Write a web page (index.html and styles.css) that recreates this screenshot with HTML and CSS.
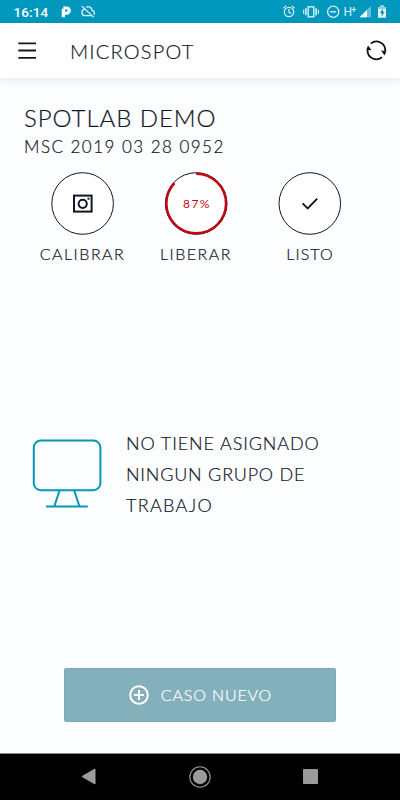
FILE: index.html
```html
<!DOCTYPE html>
<html lang="es">
<head>
<meta charset="utf-8">
<title>Microspot</title>
<link rel="stylesheet" href="styles.css">
</head>
<body>
<div class="status">
  <span class="time">16:14</span>
  <svg class="status-left" width="40" height="23" viewBox="0 0 40 23">
    <path d="M3.3 17.3V8.8M3.3 8h3.4a2.2 2.2 0 0 1 0 5.2H3" fill="none" stroke="#fff" stroke-width="3.2"/>
    <g fill="none" stroke="#d9f0f6" stroke-width="1.3"><path d="M24.5 9.2C21.2 9.8 20.8 15.6 25 15.6H32M26 7.2C29 5.7 31.8 7.4 32.1 10.5C34.5 11 35 13 33.8 15M21.7 6 L33.8 17.4"/></g>
  </svg>
  <svg class="status-right" width="110" height="23" viewBox="280 0 110 23" fill="none" stroke="#d9f0f6">
    <circle cx="289" cy="12" r="4.7" stroke-width="1.3"/><path d="M289 9v3.3l2.2 1.3M283.5 8.2l2.7-2.3M294.5 8.2l-2.7-2.3" stroke-width="1.2"/>
    <rect x="308.2" y="6.8" width="5.6" height="10" stroke-width="1.4"/><path d="M305.9 8.3v7M316.1 8.3v7" stroke-width="1.6"/><path d="M303.6 9.8v4M318.4 9.8v4" stroke-width="1.2"/>
    <circle cx="333.2" cy="11.8" r="5.6" stroke-width="1.3"/><path d="M330.2 11.8h6" stroke-width="1.4"/>
    <text class="network" x="343.4" y="16">H</text><path d="M351.3 9.5h5M353.8 7v5" stroke-width="1.2"/>
    <path d="M371 6v11.2h-11.5z" fill="#66bfd5" stroke="none"/><path d="M367 10v7.2h-7.5z" fill="#fff" stroke="none"/>
    <path d="M380 5.5h4v1.7h2v10.6h-8V7.2h2z" fill="#e4f4f8" stroke="none"/><path d="M378 7.2h2V5.5h4v1.7h2V9h-8z" fill="#8ccfdf" stroke="none"/><path d="M383 8.5l-3 4.5h1.6v3.5l3-4.7h-1.7z" fill="#078fb0" stroke="none"/>
  </svg>
</div>
<header class="bar">
  <svg class="menu" width="18" height="17" viewBox="0 0 18 17"><path d="M.3 1.3h17.7M.3 8.5h17.7M.3 15.8h17.7" stroke="#15191f" stroke-width="1.8"/></svg>
  <h1>MICROSPOT</h1>
  <svg class="sync" width="22" height="22" viewBox="0 0 22 22"><g fill="none" stroke="#0c111c" stroke-width="1.8"><path d="M5.8 3.6A8.8 8.8 0 0 1 20.2 11"/><path d="M17 17.2A8.8 8.8 0 0 1 2.6 9.6"/></g><path d="M16 10.6l5.4.6-1.9 4.2zM6.6 10.2 1.3 9.8 3 5.4z" fill="#0c111c"/></svg>
</header>
<main>
  <h2>SPOTLAB DEMO</h2>
  <p class="device">MSC 2019 03 28 0952</p>
  <section class="actions">
    <div class="action calibrate">
      <svg width="64" height="64" viewBox="0 0 64 64"><circle cx="31.6" cy="31.5" r="30.8" class="ring"/><rect x="23" y="23.6" width="17.6" height="16" fill="none" stroke="#111624" stroke-width="2"/><circle cx="31.7" cy="31.8" r="4.1" fill="none" stroke="#111624" stroke-width="2"/><path d="M36.5 25.7h2v2h-2z" fill="#111624"/></svg>
      <span>CALIBRAR</span>
    </div>
    <div class="action release">
      <svg width="64" height="64" viewBox="0 0 64 64"><circle cx="32.2" cy="31.5" r="30.8" class="ring"/><circle cx="32.2" cy="31.5" r="29.8" pathLength="100" fill="none" stroke="#c4060f" stroke-width="2.4" stroke-dasharray="87 13" transform="rotate(-90 32.2 31.5)"/><text class="percent" x="32.9" y="36.3">87%</text></svg>
      <span>LIBERAR</span>
    </div>
    <div class="action ready">
      <svg width="64" height="64" viewBox="0 0 64 64"><circle cx="31.8" cy="31.5" r="30.8" class="ring"/><path d="M24.6 31.4l5.1 5L39.2 26.7" fill="none" stroke="#111624" stroke-width="1.9"/></svg>
      <span>LISTO</span>
    </div>
  </section>
  <section class="empty">
    <svg width="70" height="70" viewBox="0 0 70 70" fill="none" stroke="#0497b9" stroke-width="2"><rect x="1.8" y="1.6" width="66.6" height="49.6" rx="7"/><path d="M27.4 52 22.4 67M42.4 52 47.3 67M14.7 67.4h40.3" stroke-linecap="round"/></svg>
    <p><span class="line-one">NO TIENE ASIGNADO</span><br><span class="line-two">NINGUN GRUPO DE</span><br>TRABAJO</p>
  </section>
  <button class="new-case">
    <svg width="20" height="20" viewBox="0 0 20 20" fill="none" stroke="#fff" stroke-width="2"><circle cx="10" cy="10" r="8.8"/><path d="M10 5v10M5 10h10"/></svg>
    <span>CASO NUEVO</span>
  </button>
</main>
<nav class="system">
  <svg width="15" height="17" viewBox="0 0 15 17"><path d="M14 1v15L1 8.5z" fill="#9b9b9b" stroke="#9b9b9b" stroke-linejoin="round"/></svg>
  <svg width="22" height="22" viewBox="0 0 22 22"><circle cx="11" cy="11" r="10.2" fill="none" stroke="#9b9b9b" stroke-width="1.1"/><circle cx="11" cy="11" r="7.2" fill="#9b9b9b"/></svg>
  <svg width="15" height="15" viewBox="0 0 15 15"><rect width="15" height="15" rx="1" fill="#9b9b9b"/></svg>
</nav>
</body>
</html>
```
FILE: styles.css
```css
* { box-sizing: border-box; margin: 0; }
body { width: 400px; height: 800px; display: flex; flex-direction: column; background: #fbfdff; color: #111624; font-family: Lato, "Open Sans", sans-serif; font-weight: 300; overflow: hidden; -webkit-text-stroke: .2px; }
svg { display: block; flex: none; }
h1, h2 { font-weight: 300; white-space: nowrap; }
.status { height: 23px; flex: none; display: flex; align-items: center; background: #0098bc; padding-left: 13.5px; -webkit-text-stroke: 0; }
.time { width: 46.5px; padding-top: 2px; color: #fff; font: 500 13.5px/23px Roboto, sans-serif; letter-spacing: .1px; }
.status-right { margin-left: 180px; }
.network { font: 400 12px Roboto, sans-serif; fill: #d9f0f6; stroke: none; }
.bar { height: 55px; flex: none; display: flex; align-items: center; background: #fff; padding: 0 13px 0 18px; box-shadow: 0 2px 8px #1b244018; }
h1 { margin-left: 34px; font-size: 20px; line-height: 24px; letter-spacing: 1.2px; }
.sync { margin-left: auto; }
main { flex: 1; display: flex; flex-direction: column; }
h2 { margin: 25px 0 0 24px; font-size: 24px; line-height: 30px; letter-spacing: .95px; }
.device { margin: 3px 0 0 24px; font-size: 17px; line-height: 22px; letter-spacing: 1.47px; white-space: nowrap; }
.actions { display: grid; grid-template-columns: 113px 114px 113px; margin: 14px 0 0 26px; }
.action { display: flex; flex-direction: column; align-items: center; }
.action span { margin-top: 8px; font-size: 16px; line-height: 20px; letter-spacing: 1.5px; }
.action.ready span { letter-spacing: 1.1px; padding-left: 1px; }
.ring { fill: #fff; stroke: #111624; stroke-width: 1; }
.percent { font: 400 12px Lato, sans-serif; letter-spacing: 1.4px; text-anchor: middle; fill: #c4060f; -webkit-text-stroke: 0; }
.empty { display: flex; align-items: flex-start; margin: 164px 0 0 32px; }
.empty svg { margin-top: 11px; }
.empty p { margin-left: 24px; font-size: 18px; line-height: 31px; letter-spacing: 1.3px; white-space: nowrap; }
.empty .line-one { letter-spacing: .88px; }
.empty .line-two { letter-spacing: .78px; }
.new-case { width: 272px; height: 54px; margin: auto auto 31px 64px; display: flex; align-items: center; justify-content: center; gap: 12px; padding: 0 0 1px 1px; border: 1px solid #7cabb6; border-radius: 2px; background: #84b0bc; color: #fff; font: 300 16px Lato, sans-serif; letter-spacing: .85px; }
.system { height: 47px; flex: none; display: flex; align-items: center; justify-content: space-between; padding: 0 82px 1px 81px; background: #000; border-top: 1px solid #888; }
```
